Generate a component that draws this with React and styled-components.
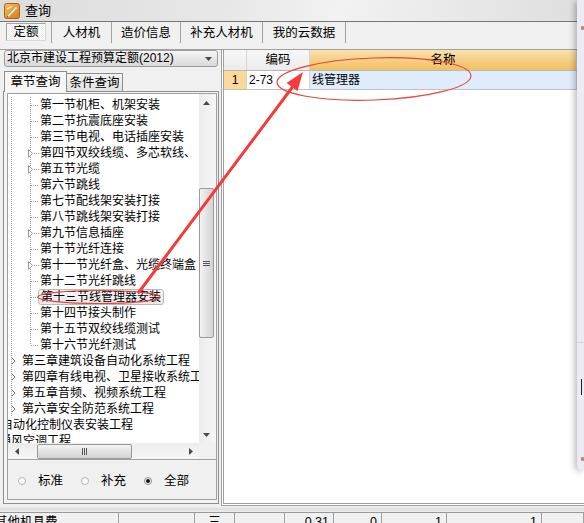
import styled, { createGlobalStyle, css } from "styled-components";

const GlobalStyle = createGlobalStyle`
  html, body { margin: 0; padding: 0; background: #f0f0f0; }
  body {
    font-family: "Liberation Sans", "Noto Sans CJK SC", sans-serif;
    font-size: 12px;
    color: #000;
  }
  * { box-sizing: border-box; }
`;

const Screen = styled.div`
  position: relative;
  width: 584px;
  height: 523px;
  overflow: hidden;
  background: #f0f0f0;
  display: flex;
  flex-direction: column;
`;

const TitleBar = styled.div`
  height: 22px;
  flex: none;
  display: flex;
  align-items: center;
  gap: 5px;
  padding-left: 4px;
  background: linear-gradient(100deg, #dcdcdc 0%, #e8e8e8 40%, #f2f2f2 58%, #dedede 100%);
  border-bottom: 1px solid #767676;
  font-size: 13px;
  line-height: 20px;
`;

const TabBar = styled.div`
  height: 28px;
  flex: none;
  display: flex;
  align-items: flex-start;
  border-bottom: 1px solid #a0a0a0;
`;

const TopTab = styled.div`
  width: ${(p) => p.$w}px;
  height: 21px;
  display: flex;
  align-items: center;
  justify-content: center;
  border-right: 1px solid #a0a0a0;
  font-size: 12.5px;
  line-height: 20px;
  ${(p) =>
    p.$active &&
    css`
      justify-content: flex-start;
      align-items: flex-start;
      padding: 1px 0 0 6px;
    `}
`;

const ActiveBox = styled.div`
  width: 40px;
  height: 18px;
  display: flex;
  align-items: center;
  justify-content: center;
  border: 1px solid #a3a3a3;
  border-right-color: #d8d8d8;
  border-bottom-color: #d8d8d8;
  background: repeating-conic-gradient(#ececec 0 25%, #ffffff 0 50%) 0 0 / 2px 2px;
`;

const Body = styled.div`
  height: 456px;
  flex: none;
  display: flex;
`;

const LeftPanel = styled.div`
  width: 221px;
  flex: none;
  display: flex;
  flex-direction: column;
  min-width: 0;
`;

const Dropdown = styled.div`
  height: 17px;
  margin: 0 3px 0 4px;
  display: flex;
  align-items: center;
  justify-content: space-between;
  padding: 0 5px 0 2px;
  border: 1px solid #9c9c9c;
  border-radius: 3px;
  background: linear-gradient(#f7f7f7, #e6e6e6 50%, #d9d9d9);
  line-height: 15px;
  white-space: nowrap;
`;

const QueryTabs = styled.div`
  height: 20px;
  margin-top: 4px;
  padding-left: 4px;
  display: flex;
  align-items: flex-end;
  position: relative;
  z-index: 1;
`;

const QueryTab = styled.div`
  width: ${(p) => p.$w}px;
  height: ${(p) => (p.$active ? 21 : 18)}px;
  display: flex;
  align-items: center;
  justify-content: center;
  border: 1px solid #8e8e8e;
  border-left-width: ${(p) => (p.$active ? 1 : 0)}px;
  font-size: 12.5px;
  line-height: 16px;
  ${(p) =>
    p.$active
      ? css`
          background: #f7f7f7;
          border-bottom: none;
          margin-bottom: -1px;
        `
      : css`
          background: linear-gradient(#f2f2f2, #e2e2e2);
          border-bottom: none;
          padding-top: 1px;
        `}
`;

const TabPage = styled.div`
  height: 413px;
  margin-left: 3px;
  width: 216px;
  display: flex;
  border: 1px solid #8e8e8e;
  background: #f3f3f3;
  padding: 1px 1px 3px 3px;
`;

const InnerBox = styled.div`
  flex: 1;
  min-width: 0;
  display: flex;
  flex-direction: column;
  border: 1px solid #a0a0a0;
  background: #f0f0f0;
`;

const TreeBox = styled.div`
  height: 366px;
  flex: none;
  display: flex;
  flex-direction: column;
  border-bottom: 1px solid #a0a0a0;
`;

const TreeMain = styled.div`
  height: 349px;
  flex: none;
  display: flex;
  min-width: 0;
`;

const Viewport = styled.div`
  flex: 1;
  min-width: 0;
  overflow: hidden;
  background: #fff;
  padding-top: 3px;
`;

const TreeRow = styled.div`
  height: 16px;
  display: flex;
  align-items: center;
  white-space: nowrap;
  margin-left: ${(p) => p.$shift || 0}px;
  line-height: 16px;
`;

const GuideSvg = styled.svg`
  flex: none;
  display: block;
`;

const Label = styled.span`
  line-height: 14px;
  ${(p) =>
    p.$selected &&
    css`
      margin-left: -2px;
      padding: 0 2px;
      border: 1px solid #b9b9b9;
      border-radius: 3px;
      background: linear-gradient(#f8f8f8, #e8e8e8);
    `}
`;

const VScroll = styled.div`
  width: 17px;
  flex: none;
  display: flex;
  flex-direction: column;
  background: linear-gradient(90deg, #ececec, #f6f6f6);
  padding-right: 2px;
`;

const ArrowBtn = styled.div`
  flex: none;
  width: ${(p) => (p.$h ? 17 : 15)}px;
  height: ${(p) => (p.$h ? 16 : 17)}px;
  display: flex;
  align-items: center;
  justify-content: center;
`;

const VTrack = styled.div`
  flex: 1;
  display: flex;
  flex-direction: column;
  align-items: center;
`;

const VThumb = styled.div`
  width: 15px;
  height: 150px;
  margin-top: 77px;
  border: 1px solid #999;
  border-radius: 2px;
  background: linear-gradient(90deg, #f4f4f4, #e4e4e4 45%, #d3d3d3);
  display: flex;
  align-items: center;
  justify-content: center;
`;

const HScroll = styled.div`
  height: 16px;
  flex: none;
  display: flex;
  background: linear-gradient(#ececec, #f6f6f6);
`;

const HTrack = styled.div`
  width: 157px;
  flex: none;
  display: flex;
  align-items: center;
`;

const HThumb = styled.div`
  width: 95px;
  height: 15px;
  margin-left: 12px;
  border: 1px solid #999;
  border-radius: 2px;
  background: linear-gradient(#f4f4f4, #e4e4e4 45%, #d3d3d3);
  display: flex;
  align-items: center;
  justify-content: center;
`;

const Corner = styled.div`
  flex: 1;
  background: #f0f0f0;
`;

const RadioRow = styled.div`
  flex: 1;
  display: flex;
  align-items: center;
  gap: 18px;
  padding: 2px 0 0 10px;
`;

const RadioItem = styled.label`
  display: flex;
  align-items: center;
  gap: 12px;
  font-size: 12.5px;
  line-height: 16px;
`;

const RadioDot = styled.span`
  width: 8px;
  height: 8px;
  border-radius: 50%;
  border: 1px solid ${(p) => (p.$on ? "#8a8a8a" : "#b4b4b4")};
  background: #fbfbfb;
  display: flex;
  align-items: center;
  justify-content: center;
  &::after {
    content: "";
    width: 4px;
    height: 4px;
    border-radius: 50%;
    background: ${(p) => (p.$on ? "#111" : "transparent")};
  }
`;

const GridFrame = styled.div`
  flex: 1;
  min-width: 0;
  display: flex;
  flex-direction: column;
  background: #fff;
  border-left: 3px double #a0a0a0;
  border-bottom: 3px double #a0a0a0;
`;

const GridRow = styled.div`
  height: ${(p) => (p.$head ? 21 : 19)}px;
  flex: none;
  display: flex;
  border-bottom: 1px solid ${(p) => (p.$head ? "#b8b8b8" : "#c0c0c0")};
`;

const Cell = styled.div`
  width: ${(p) => p.$w}px;
  flex: ${(p) => (p.$w ? "none" : 1)};
  display: flex;
  align-items: center;
  justify-content: ${(p) => (p.$center ? "center" : "flex-start")};
  padding-left: ${(p) => (p.$center ? 0 : 2)}px;
  border-right: 1px solid #d4d4d4;
  background: ${(p) => p.$bg || "transparent"};
  font-size: ${(p) => (p.$head ? 12.5 : 12)}px;
  line-height: 16px;
  white-space: nowrap;
`;

const Splitter = styled.div`
  height: 7px;
  flex: none;
  background: linear-gradient(#f3f3f3, #dedede 50%, #eeeeee);
  border-bottom: 1px solid #9a9a9a;
`;

const BottomRow = styled.div`
  flex: 1;
  display: flex;
`;

const BottomCell = styled.div`
  width: ${(p) => p.$w}px;
  flex: ${(p) => (p.$w ? "none" : 1)};
  border-right: 1px solid #a0a0a0;
  overflow: hidden;
  white-space: nowrap;
  text-align: ${(p) => p.$align || "left"};
  text-indent: ${(p) => p.$indent || 0}px;
  padding-right: ${(p) => (p.$align === "right" ? 4 : 0)}px;
  font-size: 12.5px;
  line-height: 16px;
  padding-top: 1px;
`;

const Overlay = styled.svg`
  position: absolute;
  left: 0;
  top: 0;
  pointer-events: none;
`;

const SideWindow = styled.div`
  position: absolute;
  right: 0;
  top: 0;
  width: 7px;
  height: 470px;
  background: #ecebf4;
  border-bottom-left-radius: 5px;
  box-shadow: -2px 1px 6px rgba(0, 0, 0, 0.3);
  display: flex;
  flex-direction: column;
  align-items: flex-end;
`;

const SideMark = styled.div`
  width: 3px;
  height: 4px;
  margin-top: ${(p) => p.$top}px;
  background: #b09070;
  border-radius: 1px;
`;

const SideRule = styled.div`
  width: 100%;
  height: 1px;
  margin-top: 312px;
  background: #d4d3de;
`;

const SideCursor = styled.div`
  width: 1px;
  height: 16px;
  margin: 36px 2px 0 0;
  background: #222;
`;

function AppIcon() {
  return (
    <svg width="16" height="16" viewBox="0 0 16 16">
      <defs>
        <linearGradient id="ic" x1="0" y1="0" x2="1" y2="1">
          <stop offset="0" stopColor="#f7c15a" />
          <stop offset="1" stopColor="#d77a17" />
        </linearGradient>
      </defs>
      <rect x="0.5" y="0.5" width="15" height="15" rx="2" fill="url(#ic)" stroke="#b0620f" />
      <path d="M3 13 L12 3.5 L13.5 5 L4.5 14 Z" fill="#fff" stroke="#c98a3a" strokeWidth="0.6" />
      <path d="M3 13 L4.5 14 L2.6 14.4 Z" fill="#7a4a10" />
      <path d="M3 6 L8 3.5" stroke="#fff" strokeWidth="1.2" />
    </svg>
  );
}

function Tri({ dir }) {
  const pts = {
    up: "0,4 3.5,0 7,4",
    down: "0,0 7,0 3.5,4",
    left: "4,0 4,7 0,3.5",
    right: "0,0 4,3.5 0,7",
  }[dir];
  const w = dir === "up" || dir === "down" ? 7 : 4;
  const h = dir === "up" || dir === "down" ? 4 : 7;
  return (
    <GuideSvg width={w} height={h}>
      <polygon points={pts} fill="#4a4a4a" />
    </GuideSvg>
  );
}

function Grip({ horizontal }) {
  return horizontal ? (
    <svg width="7" height="7">
      <path d="M1.5 0 V7 M3.5 0 V7 M5.5 0 V7" stroke="#555" strokeWidth="1" />
    </svg>
  ) : (
    <svg width="7" height="7">
      <path d="M0 1.5 H7 M0 3.5 H7 M0 5.5 H7" stroke="#555" strokeWidth="1" />
    </svg>
  );
}

function Guide({ kind, folded, last }) {
  if (kind === "loose") return null;
  const dot = { stroke: "#9a9a9a", strokeDasharray: "1 1" };
  if (kind === "chapter") {
    return (
      <GuideSvg width="14" height="16">
        <line x1="3.5" y1="0" x2="3.5" y2="16" {...dot} />
        <path d="M4 5 L7 8 L4 11" fill="none" stroke="#777" />
      </GuideSvg>
    );
  }
  return (
    <GuideSvg width="32" height="16">
      <line x1="3.5" y1="0" x2="3.5" y2="16" {...dot} />
      <line x1="22.5" y1="0" x2="22.5" y2={last ? 8 : 16} {...dot} />
      {folded ? (
        <>
          <path d="M20.5 4.5 L24.5 8.5 L20.5 12.5 Z" fill="#fff" stroke="#9a9a9a" />
          <line x1="26" y1="8.5" x2="31" y2="8.5" {...dot} />
        </>
      ) : (
        <line x1="23" y1="8.5" x2="31" y2="8.5" {...dot} />
      )}
    </GuideSvg>
  );
}

const treeRows = [
  { text: "第一节机柜、机架安装", kind: "sub" },
  { text: "第二节抗震底座安装", kind: "sub" },
  { text: "第三节电视、电话插座安装", kind: "sub" },
  { text: "第四节双绞线缆、多芯软线、", kind: "sub", folded: true },
  { text: "第五节光缆", kind: "sub", folded: true },
  { text: "第六节跳线", kind: "sub" },
  { text: "第七节配线架安装打接", kind: "sub" },
  { text: "第八节跳线架安装打接", kind: "sub" },
  { text: "第九节信息插座", kind: "sub", folded: true },
  { text: "第十节光纤连接", kind: "sub" },
  { text: "第十一节光纤盒、光缆终端盒", kind: "sub", folded: true },
  { text: "第十二节光纤跳线", kind: "sub" },
  { text: "第十三节线管理器安装", kind: "sub", selected: true },
  { text: "第十四节接头制作", kind: "sub" },
  { text: "第十五节双绞线缆测试", kind: "sub" },
  { text: "第十六节光纤测试", kind: "sub", last: true },
  { text: "第三章建筑设备自动化系统工程", kind: "chapter" },
  { text: "第四章有线电视、卫星接收系统工", kind: "chapter" },
  { text: "第五章音频、视频系统工程", kind: "chapter" },
  { text: "第六章安全防范系统工程", kind: "chapter" },
  { text: "自动化控制仪表安装工程", kind: "loose", shift: -7 },
  { text: "通风空调工程", kind: "loose", shift: -9 },
];

const topTabs = [
  { label: "定额", w: 52, active: true },
  { label: "人材机", w: 60 },
  { label: "造价信息", w: 69 },
  { label: "补充人材机", w: 82 },
  { label: "我的云数据", w: 83 },
];

const bottomCells = [
  { w: 119, text: "其他机具费", indent: -5 },
  { w: 76, text: "" },
  { w: 40, text: "三", align: "center" },
  { w: 50, text: "" },
  { w: 49, text: "0.31", align: "right" },
  { w: 48, text: "0", align: "right" },
  { w: 65, text: "1", align: "right" },
  { w: 95, text: "1", align: "right" },
  { text: "" },
];

export default function App() {
  return (
    <>
      <GlobalStyle />
      <Screen>
        <TitleBar>
          <AppIcon />
          <span>查询</span>
        </TitleBar>

        <TabBar>
          {topTabs.map((t) => (
            <TopTab key={t.label} $w={t.w} $active={t.active}>
              {t.active ? <ActiveBox>{t.label}</ActiveBox> : t.label}
            </TopTab>
          ))}
        </TabBar>

        <Body>
          <LeftPanel>
            <Dropdown>
              <span>北京市建设工程预算定额(2012)</span>
              <Tri dir="down" />
            </Dropdown>
            <QueryTabs>
              <QueryTab $w={63} $active>章节查询</QueryTab>
              <QueryTab $w={56}>条件查询</QueryTab>
            </QueryTabs>
            <TabPage>
              <InnerBox>
                <TreeBox>
                  <TreeMain>
                    <Viewport>
                      {treeRows.map((r) => (
                        <TreeRow key={r.text} $shift={r.shift}>
                          <Guide kind={r.kind} folded={r.folded} last={r.last} />
                          <Label $selected={r.selected}>{r.text}</Label>
                        </TreeRow>
                      ))}
                    </Viewport>
                    <VScroll>
                      <ArrowBtn>
                        <Tri dir="up" />
                      </ArrowBtn>
                      <VTrack>
                        <VThumb>
                          <Grip />
                        </VThumb>
                      </VTrack>
                      <ArrowBtn>
                        <Tri dir="down" />
                      </ArrowBtn>
                    </VScroll>
                  </TreeMain>
                  <HScroll>
                    <ArrowBtn $h>
                      <Tri dir="left" />
                    </ArrowBtn>
                    <HTrack>
                      <HThumb>
                        <Grip horizontal />
                      </HThumb>
                    </HTrack>
                    <ArrowBtn $h>
                      <Tri dir="right" />
                    </ArrowBtn>
                    <Corner />
                  </HScroll>
                </TreeBox>
                <RadioRow>
                  <RadioItem>
                    <RadioDot />
                    标准
                  </RadioItem>
                  <RadioItem>
                    <RadioDot />
                    补充
                  </RadioItem>
                  <RadioItem>
                    <RadioDot $on />
                    全部
                  </RadioItem>
                </RadioRow>
              </InnerBox>
            </TabPage>
          </LeftPanel>

          <GridFrame>
            <GridRow $head>
              <Cell $w={23} $head $bg="linear-gradient(#f7f7f7, #ececec)" />
              <Cell $w={63} $head $center $bg="linear-gradient(#f7f7f7, #ececec)">
                编码
              </Cell>
              <Cell $w={267} $head $center $bg="linear-gradient(#fbe2b0, #f6cf85 50%, #f0c060)">
                名称
              </Cell>
              <Cell $head $bg="linear-gradient(#fbe2b0, #f6cf85 50%, #f0c060)" />
            </GridRow>
            <GridRow>
              <Cell $w={23} $center $bg="#fdd89b">
                1
              </Cell>
              <Cell $w={63}>2-73</Cell>
              <Cell $w={267} $bg="#deecfc">
                线管理器
              </Cell>
              <Cell $bg="#deecfc" />
            </GridRow>
          </GridFrame>
        </Body>

        <Splitter />
        <BottomRow>
          {bottomCells.map((c, i) => (
            <BottomCell key={i} $w={c.w} $align={c.align} $indent={c.indent}>
              {c.text}
            </BottomCell>
          ))}
        </BottomRow>

        <SideWindow>
          <SideMark $top={26} />
          <SideRule />
          <SideCursor />
          <SideMark $top={62} />
        </SideWindow>

        <Overlay width="584" height="523" viewBox="0 0 584 523">
          <ellipse
            cx="374"
            cy="79"
            rx="97"
            ry="21"
            fill="none"
            stroke="#e8433f"
            strokeWidth="1.2"
            transform="rotate(-2 374 79)"
          />
          <ellipse cx="99" cy="297" rx="61" ry="6.5" fill="none" stroke="#e8433f" strokeWidth="1.1" />
          <line x1="139" y1="292" x2="294" y2="85" stroke="#f23c3c" strokeWidth="3" strokeLinecap="round" />
          <polygon points="303,72 297.5,91 286.5,83" fill="#f23c3c" />
        </Overlay>
      </Screen>
    </>
  );
}
